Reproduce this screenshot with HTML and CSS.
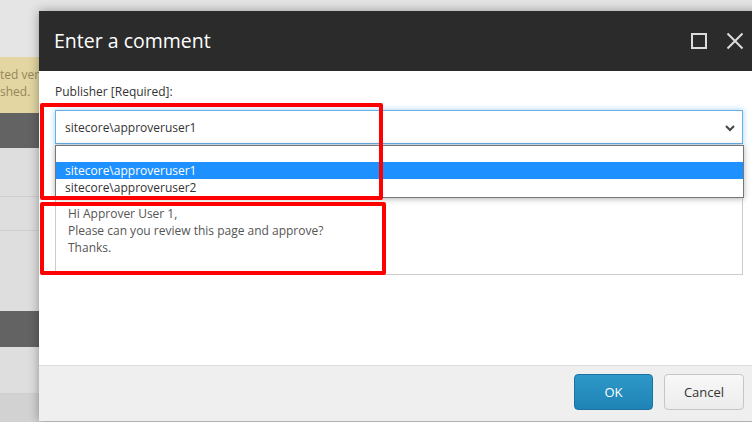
FILE: index.html
```html
<!DOCTYPE html>
<html>
<head>
<meta charset="utf-8">
<link rel="stylesheet" href="styles.css">
</head>
<body>
<div class="page">
  <div class="top"></div>
  <div class="notice">ted version of this item, and it will not be<br>shed.</div>
  <div class="bar"></div>
  <div class="row r1"></div>
  <div class="row r2"></div>
  <div class="row r3"></div>
  <div class="bar b2"></div>
  <div class="row r4"></div>
  <div class="rest"></div>
</div>

<div class="modal">
  <div class="modal-header">
    <div class="title">Enter a comment</div>
    <div class="actions">
      <svg class="icon" width="18" height="18" viewBox="0 0 18 18"><rect x="2" y="2" width="14" height="14" fill="none" stroke="#dcdcdc" stroke-width="2"/></svg>
      <svg class="icon" width="18" height="18" viewBox="0 0 18 18"><path d="M1.5 1.5 L16.5 16.5 M16.5 1.5 L1.5 16.5" stroke="#dcdcdc" stroke-width="2" fill="none"/></svg>
    </div>
  </div>
  <div class="modal-body">
    <div class="label">Publisher [Required]:</div>
    <div class="select">
      <span>sitecore\approveruser1</span>
      <svg class="chev" width="10" height="8" viewBox="0 0 10 8"><path d="M1 2 L5 6 L9 2" stroke="#444" stroke-width="2" fill="none"/></svg>
    </div>
    <div class="textarea">Hi Approver User 1,<br>Please can you review this page and approve?<br>Thanks.</div>
    <div class="dropdown">
      <div class="opt empty"></div>
      <div class="opt sel">sitecore\approveruser1</div>
      <div class="opt last">sitecore\approveruser2</div>
    </div>
  </div>
  <div class="modal-footer">
    <button class="btn ok">OK</button>
    <button class="btn cancel">Cancel</button>
  </div>
</div>

<div class="mark m1"></div>
<div class="mark m2"></div>
</body>
</html>
```
FILE: styles.css
```css
html, body {
  margin: 0;
  padding: 0;
  width: 752px;
  height: 422px;
  overflow: hidden;
  font-family: "Open Sans", "Noto Sans", sans-serif;
  background: #d2d2d2;
  position: relative;
}
.page { display: flex; flex-direction: column; }
.top { height: 57px; background: #e5e5e5; }
.notice {
  height: 56px;
  box-sizing: border-box;
  padding-top: 9px;
  background: #e3d6a3;
  color: #968658;
  font-size: 12px;
  line-height: 17px;
  white-space: nowrap;
}
.bar { height: 35px; background: #636363; }
.b2 { height: 36px; }
.row { background: #dedede; border-bottom: 1px solid #cfcfcf; }
.r1 { height: 48px; }
.r2 { height: 33px; }
.r3 { height: 80px; border-bottom: none; }
.r4 { height: 46px; }
.rest { height: 40px; background: #d2d2d2; }

.modal {
  position: absolute;
  left: 39px;
  top: 11px;
  width: 720px;
  height: 410px;
  display: flex;
  flex-direction: column;
  background: #fff;
  box-shadow: 0 0 10px rgba(0,0,0,0.35);
}
.modal-header {
  height: 60px;
  background: #2b2b2b;
  display: flex;
  align-items: center;
  justify-content: space-between;
  padding: 0 15px;
  flex: none;
}
.title { color: #fff; font-size: 19.5px; margin-top: -1px; }
.actions { display: flex; gap: 18px; margin-top: -1px; }
.icon { display: block; }

.modal-body {
  position: relative;
  flex: 1;
  padding: 12px 16px 0;
}
.label { font-size: 12px; color: #333; line-height: 17px; }
.select {
  margin-top: 10px;
  height: 34px;
  box-sizing: border-box;
  border: 1px solid #66afe9;
  box-shadow: 0 0 6px rgba(102,175,233,0.6);
  display: flex;
  align-items: center;
  justify-content: space-between;
  padding: 0 7px 0 9px;
  font-size: 12px;
  color: #333;
}
.chev { margin-top: 2px; }
.textarea {
  margin-top: 53px;
  height: 78px;
  box-sizing: border-box;
  border: 1px solid #ccc;
  padding: 7px 12px;
  font-size: 12px;
  line-height: 17px;
  color: #555;
}
.dropdown {
  position: absolute;
  left: 16px;
  top: 74px;
  width: 689px;
  box-sizing: border-box;
  background: #fff;
  border: 1px solid #767676;
  box-shadow: 0 1px 6px rgba(0,0,0,0.3);
  font-size: 12px;
  color: #333;
}
.opt { height: 17px; line-height: 17px; padding-left: 9px; }
.opt.empty { height: 16px; }
.opt.last { height: 18px; }
.opt.sel { background: #1e90ff; color: #fff; }

.modal-footer {
  height: 56px;
  box-sizing: border-box;
  background: #efefef;
  border-top: 1px solid #dcdcdc;
  display: flex;
  justify-content: flex-end;
  align-items: flex-start;
  gap: 11px;
  padding: 8px 15px 0;
  flex: none;
}
.btn {
  height: 36px;
  border-radius: 4px;
  font-family: "Open Sans", sans-serif;
  font-size: 13px;
  cursor: pointer;
}
.ok {
  width: 79px;
  background: linear-gradient(#2d98c9, #1f84b5);
  border: 1px solid #1b72a0;
  color: #fff;
}
.cancel {
  width: 80px;
  background: linear-gradient(#f8f8f8, #ececec);
  border: 1px solid #c6c6c6;
  color: #333;
}

.mark {
  position: absolute;
  border: 4px solid #ff0000;
  border-radius: 2px;
  box-sizing: border-box;
}
.m1 { left: 40px; top: 103px; width: 343px; height: 97px; }
.m2 { left: 40px; top: 202px; width: 346px; height: 73px; }
```
